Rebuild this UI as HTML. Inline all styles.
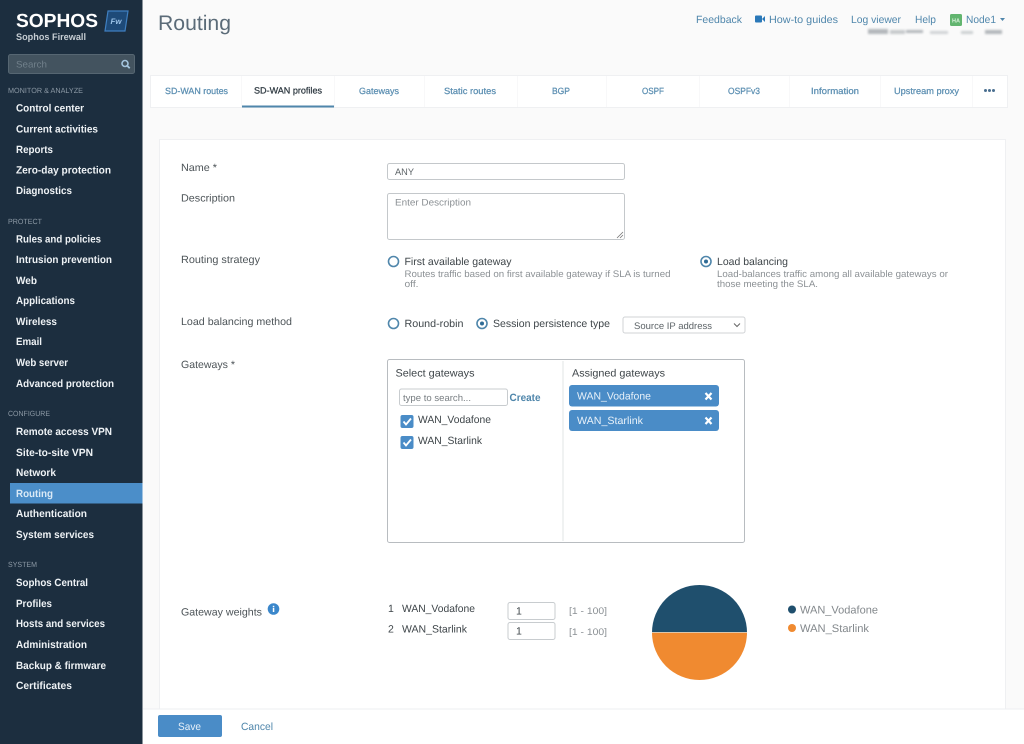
<!DOCTYPE html>
<html><head><meta charset="utf-8"><title>Routing</title>
<style>
html,body{margin:0;padding:0;width:1024px;height:744px;overflow:hidden;background:#fafafa}
svg{display:block;font-family:"Liberation Sans",sans-serif;filter:blur(.35px)}
text{text-rendering:geometricPrecision}
.n{fill:#eef2f5;font-size:10.5px;font-weight:bold}
.h{fill:#8c99a5;font-size:7.5px}
.l{fill:#4d5458;font-size:10.5px}
.t{fill:#5c8fb2;font-size:9px;stroke:#5c8fb2;stroke-width:.25px}
.k{fill:#4f86ab;font-size:10.5px}
.g{fill:#8b9094;font-size:9.5px}
.d{fill:#3e4549;font-size:10.5px}
</style></head><body>
<svg width="1024" height="744" viewBox="0 0 1024 744" xmlns="http://www.w3.org/2000/svg">
<defs><filter id="b" x="-10%" y="-100%" width="120%" height="300%"><feGaussianBlur stdDeviation="1"/></filter></defs>
<rect width="1024" height="744" fill="#fafafa"/>
<!-- sidebar -->
<rect width="142.500" height="744" fill="#1c2e3f"/>
<text x="16" y="27" fill="#fff" font-size="19" font-weight="bold" textLength="82" lengthAdjust="spacingAndGlyphs">SOPHOS</text>
<path d="M108 11h20l-3 20h-20z" fill="#1e4a78" stroke="#3f7fc0" stroke-width="1.2"/>
<text x="110.500" y="24" fill="#9cc3e8" font-size="8" font-style="italic" font-weight="bold" textLength="11" lengthAdjust="spacingAndGlyphs">Fw</text>
<text x="16" y="40" fill="#c5ccd2" font-size="9.500" font-weight="bold" textLength="70" lengthAdjust="spacingAndGlyphs">Sophos Firewall</text>
<rect x="8.500" y="54.500" width="126" height="19" rx="2" fill="#43535f" stroke="#566672"/>
<text x="16" y="67.500" fill="#71808b" font-size="9.500" textLength="31" lengthAdjust="spacingAndGlyphs">Search</text>
<circle cx="125" cy="63.500" r="3" fill="none" stroke="#a4c4de" stroke-width="1.600"/><path d="M127.200 65.700l2.500 2.500" stroke="#a4c4de" stroke-width="1.800"/>
<text class="h" x="8" y="93" textLength="75" lengthAdjust="spacingAndGlyphs">MONITOR &amp; ANALYZE</text>
<text class="n" x="16" y="111.500" textLength="68" lengthAdjust="spacingAndGlyphs">Control center</text>
<text class="n" x="16" y="132.500" textLength="82" lengthAdjust="spacingAndGlyphs">Current activities</text>
<text class="n" x="16" y="153" textLength="37" lengthAdjust="spacingAndGlyphs">Reports</text>
<text class="n" x="16" y="173.500" textLength="95" lengthAdjust="spacingAndGlyphs">Zero-day protection</text>
<text class="n" x="16" y="194" textLength="56" lengthAdjust="spacingAndGlyphs">Diagnostics</text>
<text class="h" x="8" y="224" textLength="34" lengthAdjust="spacingAndGlyphs">PROTECT</text>
<text class="n" x="16" y="242.500" textLength="85" lengthAdjust="spacingAndGlyphs">Rules and policies</text>
<text class="n" x="16" y="263" textLength="96" lengthAdjust="spacingAndGlyphs">Intrusion prevention</text>
<text class="n" x="16" y="284" textLength="21" lengthAdjust="spacingAndGlyphs">Web</text>
<text class="n" x="16" y="304" textLength="59" lengthAdjust="spacingAndGlyphs">Applications</text>
<text class="n" x="16" y="325" textLength="41" lengthAdjust="spacingAndGlyphs">Wireless</text>
<text class="n" x="16" y="345" textLength="26" lengthAdjust="spacingAndGlyphs">Email</text>
<text class="n" x="16" y="366" textLength="52" lengthAdjust="spacingAndGlyphs">Web server</text>
<text class="n" x="16" y="387" textLength="98" lengthAdjust="spacingAndGlyphs">Advanced protection</text>
<text class="h" x="8" y="416" textLength="42" lengthAdjust="spacingAndGlyphs">CONFIGURE</text>
<text class="n" x="16" y="435" textLength="96" lengthAdjust="spacingAndGlyphs">Remote access VPN</text>
<text class="n" x="16" y="456" textLength="77" lengthAdjust="spacingAndGlyphs">Site-to-site VPN</text>
<text class="n" x="16" y="476" textLength="40" lengthAdjust="spacingAndGlyphs">Network</text>
<rect x="10" y="483" width="132.500" height="20.500" fill="#4b8ec9"/>
<text class="n" x="16" y="497" textLength="37" lengthAdjust="spacingAndGlyphs" style="fill:#d9e9f6">Routing</text>
<text class="n" x="16" y="517" textLength="71" lengthAdjust="spacingAndGlyphs">Authentication</text>
<text class="n" x="16" y="538" textLength="78" lengthAdjust="spacingAndGlyphs">System services</text>
<text class="h" x="8" y="567" textLength="29" lengthAdjust="spacingAndGlyphs">SYSTEM</text>
<text class="n" x="16" y="586" textLength="72" lengthAdjust="spacingAndGlyphs">Sophos Central</text>
<text class="n" x="16" y="607" textLength="36" lengthAdjust="spacingAndGlyphs">Profiles</text>
<text class="n" x="16" y="627" textLength="89" lengthAdjust="spacingAndGlyphs">Hosts and services</text>
<text class="n" x="16" y="648" textLength="71" lengthAdjust="spacingAndGlyphs">Administration</text>
<text class="n" x="16" y="669" textLength="90" lengthAdjust="spacingAndGlyphs">Backup &amp; firmware</text>
<text class="n" x="16" y="689" textLength="56" lengthAdjust="spacingAndGlyphs">Certificates</text>
<!-- header -->
<text x="158" y="30" fill="#5b6b78" font-size="21" textLength="73" lengthAdjust="spacingAndGlyphs">Routing</text>
<text class="k" x="696" y="23" textLength="46" lengthAdjust="spacingAndGlyphs">Feedback</text>
<rect x="755" y="15.500" width="7" height="7" rx="1" fill="#2a78b8"/><path d="M762 19l3-3v6z" fill="#2a78b8"/>
<text class="k" x="769" y="23" textLength="69" lengthAdjust="spacingAndGlyphs">How-to guides</text>
<text class="k" x="851" y="23" textLength="50" lengthAdjust="spacingAndGlyphs">Log viewer</text>
<text class="k" x="915" y="23" textLength="21" lengthAdjust="spacingAndGlyphs">Help</text>
<rect x="950" y="14" width="12" height="12" rx="1.500" fill="#62b56f"/>
<text x="952" y="22.500" fill="#d5f0d8" font-size="6" font-weight="bold" textLength="8" lengthAdjust="spacingAndGlyphs">HA</text>
<text class="k" x="966" y="23" textLength="30" lengthAdjust="spacingAndGlyphs">Node1</text>
<path d="M1000 18h5l-2.500 3z" fill="#4f86ab"/>
<g fill="#b4b8bc" filter="url(#b)"><rect x="868" y="29" width="20" height="5"/><rect x="890" y="30" width="15" height="4" fill="#c6c9cc"/><rect x="906" y="30" width="17" height="3"/><rect x="930" y="31" width="18" height="3" fill="#d0d3d6"/><rect x="961" y="31" width="12" height="3" fill="#ccd0d2"/><rect x="985" y="30" width="17" height="4"/></g>
<!-- tabs -->
<rect x="150.500" y="75.500" width="857" height="32" fill="#fff" stroke="#eff0f2"/>
<g stroke="#f8f8f9"><path d="M241.500 76v31M334.500 76v31M424.500 76v31M517.500 76v31M606.500 76v31M699.500 76v31M789.500 76v31M880.500 76v31M972.500 76v31"/></g>
<text class="t" x="165" y="94" textLength="63" lengthAdjust="spacingAndGlyphs">SD-WAN routes</text>
<text class="t" x="254" y="93.500" textLength="68" lengthAdjust="spacingAndGlyphs" style="fill:#2f3a42;stroke:#2f3a42">SD-WAN profiles</text>
<rect x="242" y="105.500" width="92" height="2" fill="#4f86ab"/>
<text class="t" x="359" y="94" textLength="40" lengthAdjust="spacingAndGlyphs">Gateways</text>
<text class="t" x="444" y="94" textLength="52" lengthAdjust="spacingAndGlyphs">Static routes</text>
<text class="t" x="552" y="94" textLength="18" lengthAdjust="spacingAndGlyphs">BGP</text>
<text class="t" x="642" y="94" textLength="22" lengthAdjust="spacingAndGlyphs">OSPF</text>
<text class="t" x="728" y="94" textLength="32" lengthAdjust="spacingAndGlyphs">OSPFv3</text>
<text class="t" x="811" y="94" textLength="48" lengthAdjust="spacingAndGlyphs">Information</text>
<text class="t" x="894" y="94" textLength="65" lengthAdjust="spacingAndGlyphs">Upstream proxy</text>
<g fill="#4a6f90"><circle cx="985.500" cy="90.500" r="1.500"/><circle cx="989.500" cy="90.500" r="1.500"/><circle cx="993.500" cy="90.500" r="1.500"/></g>
<!-- panel -->
<rect x="159.500" y="139.500" width="846" height="580" fill="#fff" stroke="#eff0f2"/>
<text class="l" x="181" y="171" textLength="36" lengthAdjust="spacingAndGlyphs">Name *</text>
<rect x="387.500" y="163.500" width="237" height="16" rx="2" fill="#fff" stroke="#c4c8cb"/>
<text x="395" y="175" fill="#5c6367" font-size="9.500" textLength="19" lengthAdjust="spacingAndGlyphs">ANY</text>
<text class="l" x="181" y="201.500" textLength="54" lengthAdjust="spacingAndGlyphs">Description</text>
<rect x="387.500" y="193.500" width="237" height="46" rx="2" fill="#fff" stroke="#c4c8cb"/>
<text x="395" y="205.500" fill="#8b9094" font-size="9.500" textLength="76" lengthAdjust="spacingAndGlyphs">Enter Description</text>
<path d="M617 238l6-6M620 238l3-3" stroke="#777" stroke-width=".8"/>
<text class="l" x="181" y="263" textLength="79" lengthAdjust="spacingAndGlyphs">Routing strategy</text>
<circle cx="393.500" cy="261.500" r="5" fill="#fff" stroke="#4f86ab" stroke-width="1.600"/>
<text class="d" x="404.500" y="265" textLength="107" lengthAdjust="spacingAndGlyphs">First available gateway</text>
<text class="g" x="404.500" y="277" textLength="266" lengthAdjust="spacingAndGlyphs">Routes traffic based on first available gateway if SLA is turned</text>
<text class="g" x="404.500" y="287" textLength="14" lengthAdjust="spacingAndGlyphs">off.</text>
<circle cx="706" cy="261.500" r="5" fill="#fff" stroke="#4f86ab" stroke-width="1.600"/><circle cx="706" cy="261.500" r="2" fill="#2f6c96"/>
<text class="d" x="717" y="265" textLength="71" lengthAdjust="spacingAndGlyphs">Load balancing</text>
<text class="g" x="717" y="277" textLength="231" lengthAdjust="spacingAndGlyphs">Load-balances traffic among all available gateways or</text>
<text class="g" x="717" y="287" textLength="101" lengthAdjust="spacingAndGlyphs">those meeting the SLA.</text>
<text class="l" x="181" y="325" textLength="111" lengthAdjust="spacingAndGlyphs">Load balancing method</text>
<circle cx="393.500" cy="323.500" r="5" fill="#fff" stroke="#4f86ab" stroke-width="1.600"/>
<text class="d" x="404.500" y="327" textLength="59" lengthAdjust="spacingAndGlyphs">Round-robin</text>
<circle cx="482" cy="323.500" r="5" fill="#fff" stroke="#4f86ab" stroke-width="1.600"/><circle cx="482" cy="323.500" r="2" fill="#2f6c96"/>
<text class="d" x="493" y="327" textLength="117" lengthAdjust="spacingAndGlyphs">Session persistence type</text>
<rect x="623" y="317" width="122" height="16" rx="2" fill="#fff" stroke="#d0d3d6"/>
<text x="634" y="329" fill="#5c6367" font-size="9.500" textLength="78" lengthAdjust="spacingAndGlyphs">Source IP address</text>
<path d="M734 323.500l3 3 3-3" fill="none" stroke="#666" stroke-width="1"/>
<text class="l" x="181" y="368" textLength="54" lengthAdjust="spacingAndGlyphs">Gateways *</text>
<rect x="387.500" y="359.500" width="357" height="183" rx="2" fill="#fff" stroke="#b8bcc0"/>
<path d="M563 361v180" stroke="#e2e4e6"/>
<text class="d" x="395.500" y="376.500" textLength="79" lengthAdjust="spacingAndGlyphs">Select gateways</text>
<rect x="399.500" y="389" width="108" height="16.500" rx="2" fill="#fff" stroke="#c8cccf"/>
<text x="403" y="401" fill="#777d81" font-size="9.500" textLength="68" lengthAdjust="spacingAndGlyphs">type to search...</text>
<text x="509.500" y="401" fill="#4f86ab" font-size="10.500" font-weight="bold" textLength="31" lengthAdjust="spacingAndGlyphs">Create</text>
<rect x="400.500" y="415" width="13" height="13" rx="2" fill="#4a8cc7"/><path d="M403.500 421.500l2.500 3 5-6" fill="none" stroke="#fff" stroke-width="1.800"/>
<text class="d" x="418" y="423" textLength="73" lengthAdjust="spacingAndGlyphs">WAN_Vodafone</text>
<rect x="400.500" y="436" width="13" height="13" rx="2" fill="#4a8cc7"/><path d="M403.500 442.500l2.500 3 5-6" fill="none" stroke="#fff" stroke-width="1.800"/>
<text class="d" x="418" y="444" textLength="64" lengthAdjust="spacingAndGlyphs">WAN_Starlink</text>
<text class="d" x="572" y="376.500" textLength="93" lengthAdjust="spacingAndGlyphs">Assigned gateways</text>
<rect x="569" y="385" width="150" height="21.500" rx="3" fill="#4a8cc7"/>
<text x="577" y="399.500" fill="#e8f1f9" font-size="10.500" textLength="74" lengthAdjust="spacingAndGlyphs">WAN_Vodafone</text>
<path d="M705.500 393l6 6.500M711.500 393l-6 6.500" stroke="#fff" stroke-width="2.200"/>
<rect x="569" y="410" width="150" height="21" rx="3" fill="#4a8cc7"/>
<text x="577" y="424" fill="#e8f1f9" font-size="10.500" textLength="66" lengthAdjust="spacingAndGlyphs">WAN_Starlink</text>
<path d="M705.500 417.500l6 6.500M711.500 417.500l-6 6.500" stroke="#fff" stroke-width="2.200"/>
<text class="l" x="181" y="615.500" textLength="81" lengthAdjust="spacingAndGlyphs">Gateway weights</text>
<circle cx="273.500" cy="609" r="5.800" fill="#3b87cb"/><rect x="272.800" y="608" width="1.500" height="4" fill="#fff"/><rect x="272.800" y="605.800" width="1.500" height="1.500" fill="#fff"/>
<text class="d" x="388" y="612">1</text>
<text class="d" x="402" y="612" textLength="73" lengthAdjust="spacingAndGlyphs">WAN_Vodafone</text>
<rect x="508" y="602.500" width="47" height="17" rx="2" fill="#fff" stroke="#c8cccf"/>
<text class="d" x="516" y="614.500">1</text>
<text x="569" y="614" fill="#8b9094" font-size="9.500" textLength="38" lengthAdjust="spacingAndGlyphs">[1 - 100]</text>
<text class="d" x="388" y="632.500">2</text>
<text class="d" x="402" y="632.500" textLength="65" lengthAdjust="spacingAndGlyphs">WAN_Starlink</text>
<rect x="508" y="622.500" width="47" height="17" rx="2" fill="#fff" stroke="#c8cccf"/>
<text class="d" x="516" y="634.500">1</text>
<text x="569" y="635" fill="#8b9094" font-size="9.500" textLength="38" lengthAdjust="spacingAndGlyphs">[1 - 100]</text>
<path d="M652 632.500a47.500 47.500 0 0 1 95 0z" fill="#1f4f6d"/>
<path d="M652 632.500a47.500 47.500 0 0 0 95 0z" fill="#f08a30"/>
<path d="M652 632.500h95" stroke="#fbe3c9" stroke-width=".8"/>
<circle cx="792" cy="609.500" r="4" fill="#1f4f6d"/>
<text x="800" y="613.500" fill="#83888c" font-size="11" textLength="78" lengthAdjust="spacingAndGlyphs">WAN_Vodafone</text>
<circle cx="792" cy="628" r="4" fill="#f08a30"/>
<text x="800" y="632" fill="#83888c" font-size="11" textLength="69" lengthAdjust="spacingAndGlyphs">WAN_Starlink</text>
<!-- footer -->
<rect x="143" y="709" width="881" height="35" fill="#fff"/>
<path d="M143 709h881" stroke="#eeeff1"/>
<rect x="158" y="715" width="64" height="22" rx="2" fill="#4a8cc7"/>
<text x="178" y="730" fill="#e8f1f9" font-size="10.500" textLength="23" lengthAdjust="spacingAndGlyphs">Save</text>
<text class="k" x="241" y="730" textLength="32" lengthAdjust="spacingAndGlyphs">Cancel</text>
</svg>
</body></html>
